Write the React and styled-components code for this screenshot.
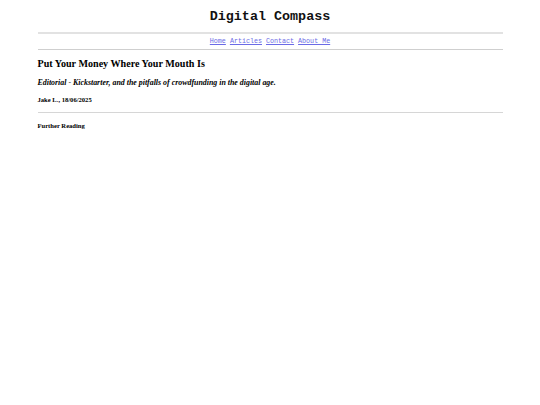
import React from 'react';
import styled, { createGlobalStyle } from 'styled-components';

const GlobalStyle = createGlobalStyle`
  html, body {
    margin: 0;
    padding: 0;
    background: #fff;
  }
  body {
    font-family: 'Liberation Serif', 'Times New Roman', serif;
    color: #000;
  }
`;

const Page = styled.div`
  width: 465px;
  margin: 0 auto;
  padding-top: 9px;
`;

const Masthead = styled.header`
  padding-bottom: 7px;
`;

const SiteTitle = styled.h1`
  margin: 0;
  text-align: center;
  font-family: 'Liberation Mono', 'Courier New', monospace;
  font-weight: bold;
  font-size: 13.4px;
  line-height: 16px;
  color: #111;
`;

const Rule = styled.hr`
  margin: 0;
  border: none;
  height: ${({ $thick }) => ($thick ? '2px' : '1px')};
  background: ${({ $tone }) => $tone || '#d6d6d6'};
`;

const Nav = styled.nav`
  display: flex;
  justify-content: center;
  gap: 4px;
  padding: 3px 0 4px;
  font-family: 'Liberation Mono', 'Courier New', monospace;
  font-size: 6.7px;
  line-height: 8px;
`;

const NavLink = styled.a`
  color: #6b6be6;
  text-decoration: underline;
`;

const Article = styled.article`
  padding-top: 8px;
`;

const Headline = styled.h2`
  margin: 0 0 8px;
  font-size: 10.1px;
  line-height: 12px;
  font-weight: bold;
`;

const Standfirst = styled.p`
  margin: 0 0 8px;
  font-size: 7.9px;
  line-height: 10px;
  font-weight: bold;
  font-style: italic;
`;

const Byline = styled.p`
  margin: 0 0 8px;
  font-size: 6.6px;
  line-height: 8px;
  font-weight: bold;
`;

const SectionLabel = styled.h3`
  margin: 9px 0 0;
  font-size: 6.6px;
  line-height: 8px;
  font-weight: bold;
`;

export default function App() {
  const links = ['Home', 'Articles', 'Contact', 'About Me'];
  return (
    <>
      <GlobalStyle />
      <Page>
        <Masthead>
          <SiteTitle>Digital Compass</SiteTitle>
        </Masthead>
        <Rule $thick $tone="#e2e2e2" />
        <Nav>
          {links.map((l) => (
            <NavLink key={l} href="#">{l}</NavLink>
          ))}
        </Nav>
        <Rule $tone="#cfcfcf" />
        <Article>
          <Headline>Put Your Money Where Your Mouth Is</Headline>
          <Standfirst>Editorial - Kickstarter, and the pitfalls of crowdfunding in the digital age.</Standfirst>
          <Byline>Jake L., 18/06/2025</Byline>
          <Rule $tone="#d6d6d6" />
          <SectionLabel>Further Reading</SectionLabel>
        </Article>
      </Page>
    </>
  );
}
